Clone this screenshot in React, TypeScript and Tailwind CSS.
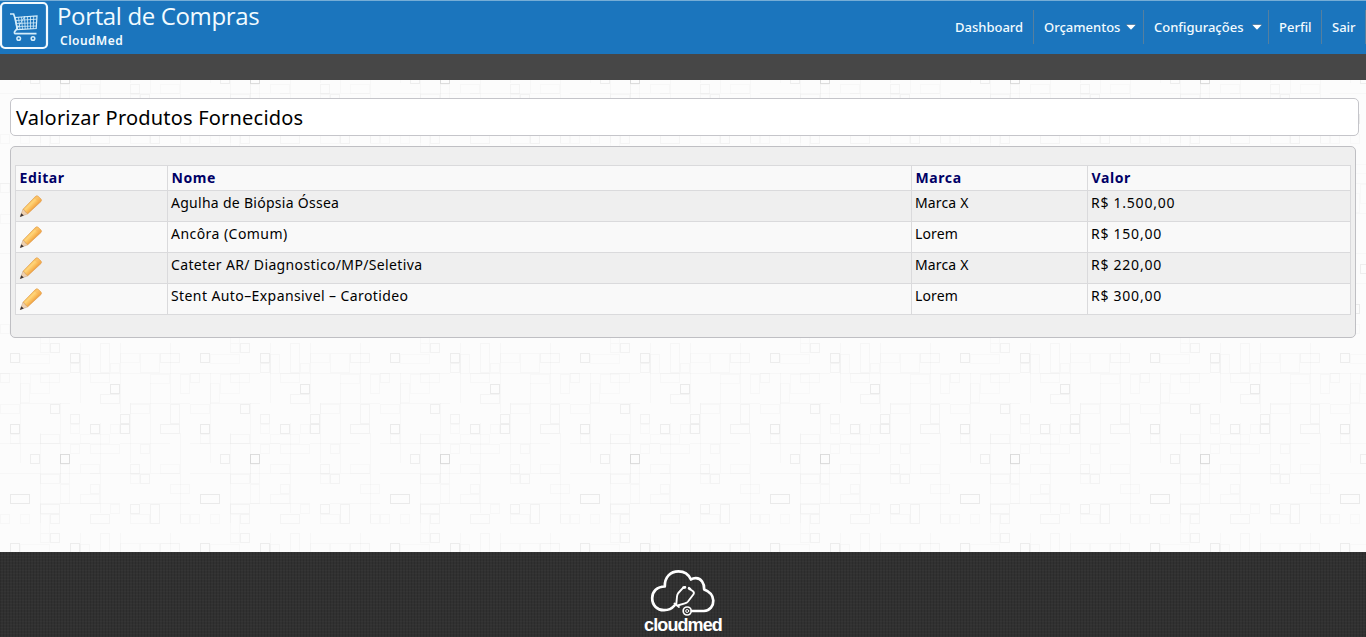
import React from 'react';

const products = [
  { name: 'Agulha de Biópsia Óssea', brand: 'Marca X', price: 'R$ 1.500,00', track: 'tracking-[0.28px]' },
  { name: 'Ancôra (Comum)', brand: 'Lorem', price: 'R$ 150,00', track: 'tracking-[0.45px]' },
  { name: 'Cateter AR/ Diagnostico/MP/Seletiva', brand: 'Marca X', price: 'R$ 220,00', track: 'tracking-[0.36px]' },
  { name: 'Stent Auto–Expansivel – Carotideo', brand: 'Lorem', price: 'R$ 300,00', track: 'tracking-[0.41px]' },
];

/* x, y, width, height, opacity of each outlined square in the background tile */
const squares: number[][] = [
  [10, 10, 10, 10, 0.06], [70, 10, 10, 10, 0.06], [50, 0, 10, 10, 0.04], [40, 0, 10, 10, 0.02],
  [70, 20, 10, 10, 0.03], [100, 0, 10, 30, 0.025], [110, 20, 10, 10, 0.02], [160, 10, 20, 10, 0.03],
  [140, 10, 20, 20, 0.02], [120, 10, 20, 10, 0.015], [110, 41, 10, 10, 0.07], [100, 51, 20, 10, 0.03],
  [0, 30, 10, 10, 0.025], [40, 30, 20, 10, 0.02], [90, 30, 20, 10, 0.02], [20, 40, 10, 20, 0.015],
  [50, 61, 10, 10, 0.05], [70, 71, 10, 10, 0.04], [10, 81, 10, 10, 0.07], [70, 81, 10, 10, 0.02],
  [90, 81, 10, 10, 0.06], [120, 71, 10, 10, 0.05], [120, 81, 10, 10, 0.06], [110, 81, 10, 10, 0.02],
  [160, 81, 20, 10, 0.04], [170, 61, 10, 20, 0.03], [130, 61, 20, 10, 0.02], [0, 61, 20, 10, 0.02],
  [40, 91, 20, 10, 0.025], [10, 91, 10, 10, 0.02], [80, 91, 30, 10, 0.015], [140, 101, 10, 10, 0.025],
  [30, 111, 10, 10, 0.055], [60, 111, 10, 10, 0.12], [70, 101, 10, 10, 0.02], [90, 101, 30, 10, 0.02],
  [40, 131, 20, 10, 0.025], [60, 121, 10, 20, 0.02], [80, 121, 20, 10, 0.02], [130, 121, 10, 10, 0.03],
  [140, 131, 10, 10, 0.035], [130, 131, 10, 10, 0.02], [90, 141, 10, 10, 0.025], [160, 121, 20, 10, 0.015],
  [10, 151, 20, 10, 0.07], [60, 141, 10, 20, 0.02], [80, 151, 20, 10, 0.02], [170, 141, 20, 10, 0.02],
  [40, 161, 20, 10, 0.03], [130, 161, 10, 10, 0.045], [150, 161, 10, 20, 0.04], [90, 171, 20, 10, 0.03],
  [130, 171, 20, 10, 0.02], [50, 171, 10, 10, 0.03], [0, 171, 10, 10, 0.02], [180, 171, 10, 10, 0.02],
  [40, 171, 10, 20, 0.015], [20, 171, 10, 10, 0.015], [110, 161, 10, 10, 0.02], [180, 31, 10, 20, 0.02],
  [150, 31, 20, 10, 0.015], [30, 31, 20, 20, 0.015], [80, 11, 10, 20, 0.02], [20, 11, 30, 10, 0.015],
];

function TiledBackground() {
  return (
    <svg className="absolute inset-0 -z-10 h-full w-full" aria-hidden="true">
      <defs>
        <pattern id="squares" width="190" height="190" y="73" patternUnits="userSpaceOnUse">
          <rect width="190" height="190" fill="#fcfcfc" />
          <path
            d="M20.500 30v90M40.500 90v90M60.500 60v80M80.500 0v60M100.500 80v90M120.500 0v70M130.500 60v60M150.500 40v90M170.500 0v60M180.500 90v90M0 30.500h70M90 30.500h100M20 60.500h50M130 60.500h60M0 100.500h90M120 100.500h50M0 130.500h80M90 130.500h90M40 160.500h80M140 160.500h50"
            stroke="#000"
            strokeOpacity=".02"
          />
          {squares.map(([x, y, w, h, o], i) => (
            <rect key={i} x={x + 0.5} y={y + 0.5} width={w - 1} height={h - 1} fill="none" stroke="#000" strokeOpacity={o} />
          ))}
        </pattern>
      </defs>
      <rect width="100%" height="100%" fill="url(#squares)" />
    </svg>
  );
}

function CartLogo() {
  return (
    <svg width="49" height="50" viewBox="0 0 49 50" fill="none" className="shrink-0">
      <rect x="1" y="3" width="46" height="45" rx="4" stroke="#f2faff" strokeWidth="2.200" />
      <g stroke="#d5edfa">
        <path d="M10 14h3.600l1.400 4 2.200 10.500-2.600 3.200q-.7 2 1.400 2H36.500" strokeWidth="1.700" />
        <path d="M15 17.500L37 15.800 36.200 28.500 17.500 29.500z" strokeWidth="1.200" />
        <path d="M15.500 20.500l21.200-1.300M16 23.500l20.700-.7M17 26.500l19.500-.5M18.500 17.500l1.500 12M21.500 17l1 12.500M24.500 17l.7 12.200M27.500 16.500l.2 12.600M30.500 16.300v12.700M33.700 16l-.4 12.800M17 29l8-13" strokeWidth=".8" />
        <circle cx="18.700" cy="38.500" r="1.800" strokeWidth="1.500" />
        <circle cx="33" cy="38.500" r="1.800" strokeWidth="1.500" />
      </g>
    </svg>
  );
}

function Pencil({ id }: { id: number }) {
  const gradient = `pencil-${id}`;
  return (
    <svg width="24" height="24" viewBox="0 -0.700 24 24">
      <defs>
        <linearGradient id={gradient} x1="8" y1="9" x2="15" y2="16" gradientUnits="userSpaceOnUse">
          <stop stopColor="#f3ae42" />
          <stop offset=".35" stopColor="#ffd67c" />
          <stop offset=".65" stopColor="#fabb58" />
          <stop offset="1" stopColor="#e8943a" />
        </linearGradient>
      </defs>
      <path d="M1.200 22.800L4 15.500 8.600 20.200z" fill="#eed0b0" stroke="#c9a078" strokeWidth=".5" />
      <path d="M4 15.500L16.300 2.900Q17.600 1.600 18.900 2.400L22 5.300Q23 6.600 22 7.800L8.600 20.200Q8.200 18.500 6.600 18.400 6.300 16.500 4 15.500z" fill={`url(#${gradient})`} stroke="#dc9a4e" strokeWidth=".6" />
      <path d="M1 23.200l1.300-3.700 2.500 2.300z" fill="#3c3435" />
      <path d="M16.300 2.900Q17.600 1.600 18.900 2.400L22 5.300Q23 6.600 22 7.800L20.600 9.100 15 4.200z" fill="#f6ac55" fillOpacity=".4" />
    </svg>
  );
}

function CloudLogo() {
  return (
    <svg width="66" height="48" viewBox="0 0 66 48" fill="none" stroke="#fff" strokeLinecap="round" strokeLinejoin="round">
      <path d="M42 42H54C60 41.500 63.500 37 63.300 31.500C63 25.500 59.500 22.500 54.200 20.500C54.500 14 51 9.500 46 9.200C44 9.100 42.500 9.500 41 10.500C38.500 5 34 2.300 28.500 2.300C20.500 2.300 14.500 8 14.800 17.500C7 17.500 2.300 22.500 2.200 29C2.100 36.500 7.500 41.300 14 41.200C19 41.200 22 39.500 24.500 36.500" strokeWidth="2.700" />
      <path d="M26.300 35L27 27.500Q27.200 25.500 28.300 24L33 18.800L35 18.500M39 19.500L43 22.200Q44.500 23.500 43.500 25.200L38 32.500Q36.800 34 35 34.300L27.500 36.500M24.500 34.500L29 38" strokeWidth="1.900" />
      <path d="M33.500 18.600l1.500-.3M39 19.200l1 .8" strokeWidth="2.600" />
      <circle cx="37.200" cy="42" r="4" strokeWidth="1.700" />
      <circle cx="37.200" cy="42" r="1.500" strokeWidth="1" />
    </svg>
  );
}

function Caret() {
  return (
    <svg width="10" height="6" viewBox="0 0 10 6" className="-mt-[3px] shrink-0">
      <path d="M0 .5h10L5 5.800z" fill="#fff" />
      <path d="M0 .3h10" stroke="#294761" strokeWidth=".6" />
    </svg>
  );
}

export default function App() {
  const navItem = 'flex h-[34px] items-center border-r border-[#557f9f] pt-[2px] pl-[10px]';
  const headCell = 'border border-[#dadadc] px-[3.500px] pb-px text-left align-middle font-bold tracking-[0.6px]';
  const cell = 'border border-[#dadadc] px-[3px] pt-[2px] align-top';
  return (
    <div className="flex h-[637px] w-full flex-col overflow-hidden font-['Noto_Sans',sans-serif] text-black">
      <header className="flex h-[54px] shrink-0 justify-between border-t border-[#76add6] bg-[#1b75bd] text-[#f2fbff]">
        <div className="-mt-px flex">
          <CartLogo />
          <div className="flex flex-col pl-[8px] whitespace-nowrap">
            <h1 className="h-[33px] font-['Open_Sans',sans-serif] text-[24px] leading-[32px] tracking-[-0.35px]">Portal de Compras</h1>
            <p className="pl-[3px] text-[12px] leading-[16px] font-semibold tracking-[0.5px]">CloudMed</p>
          </div>
        </div>
        <nav className="mt-[9px] flex text-[13px] font-medium whitespace-nowrap">
          <a className={`${navItem} w-[89px]`}><span>Dashboard</span></a>
          <a className={`${navItem} w-[110px] justify-between pr-[7px]`}><span>Orçamentos</span><Caret /></a>
          <a className={`${navItem} w-[125px] justify-between pr-[6px]`}><span>Configurações</span><Caret /></a>
          <a className={`${navItem} w-[53px]`}><span>Perfil</span></a>
          <a className={`${navItem} w-[44px]`}><span>Sair</span></a>
        </nav>
      </header>
      <div className="h-[26px] shrink-0 bg-[#474747]" />

      <main className="relative isolate flex-1 pt-[18px] pl-[10px]">
        <TiledBackground />
        <h2 className="h-[38px] w-[1349px] rounded-[5px] border border-[#c5c5ca] bg-white pl-[5px] text-[20px] leading-[37px] tracking-[0.2px]">
          <span>Valorizar Produtos Fornecidos</span>
        </h2>
        <section className="mt-[10px] h-[192px] w-[1346px] rounded-[5px] border border-[#bfbfc3] bg-[#efefef] pt-[18px] pl-[4px]">
          <table className="w-[1336px] table-fixed border-collapse text-[14px] leading-[20px]">
            <colgroup>
              <col className="w-[152px]" />
              <col className="w-[744px]" />
              <col className="w-[176px]" />
              <col />
            </colgroup>
            <thead>
              <tr className="h-[25px] bg-[#f9f9f9] text-[#000066]">
                {['Editar', 'Nome', 'Marca', 'Valor'].map((title) => (
                  <th key={title} className={headCell}><span>{title}</span></th>
                ))}
              </tr>
            </thead>
            <tbody>
              {products.map((product, i) => (
                <tr key={product.name} className="h-[31px] odd:bg-[#efefef] even:bg-[#f9f9f9]">
                  <td className={cell}><div className="h-[24px]"><Pencil id={i} /></div></td>
                  <td className={cell}><span className={product.track}>{product.name}</span></td>
                  <td className={cell}><span className="tracking-[0.15px]">{product.brand}</span></td>
                  <td className={cell}><span className="tracking-[0.75px]">{product.price}</span></td>
                </tr>
              ))}
            </tbody>
          </table>
        </section>
      </main>

      <footer className="flex h-[85px] shrink-0 flex-col items-center bg-[#313131] bg-[repeating-linear-gradient(90deg,rgba(0,0,0,0.12)_0_1px,transparent_1px_3px),repeating-linear-gradient(0deg,rgba(255,255,255,0.02)_0_1px,transparent_1px_3px)] pt-[17px] text-white">
        <CloudLogo />
        <span className="-mt-[2px] font-['Liberation_Sans',sans-serif] text-[18px] leading-[20px] font-bold tracking-[-0.9px]">cloudmed</span>
      </footer>
    </div>
  );
}
